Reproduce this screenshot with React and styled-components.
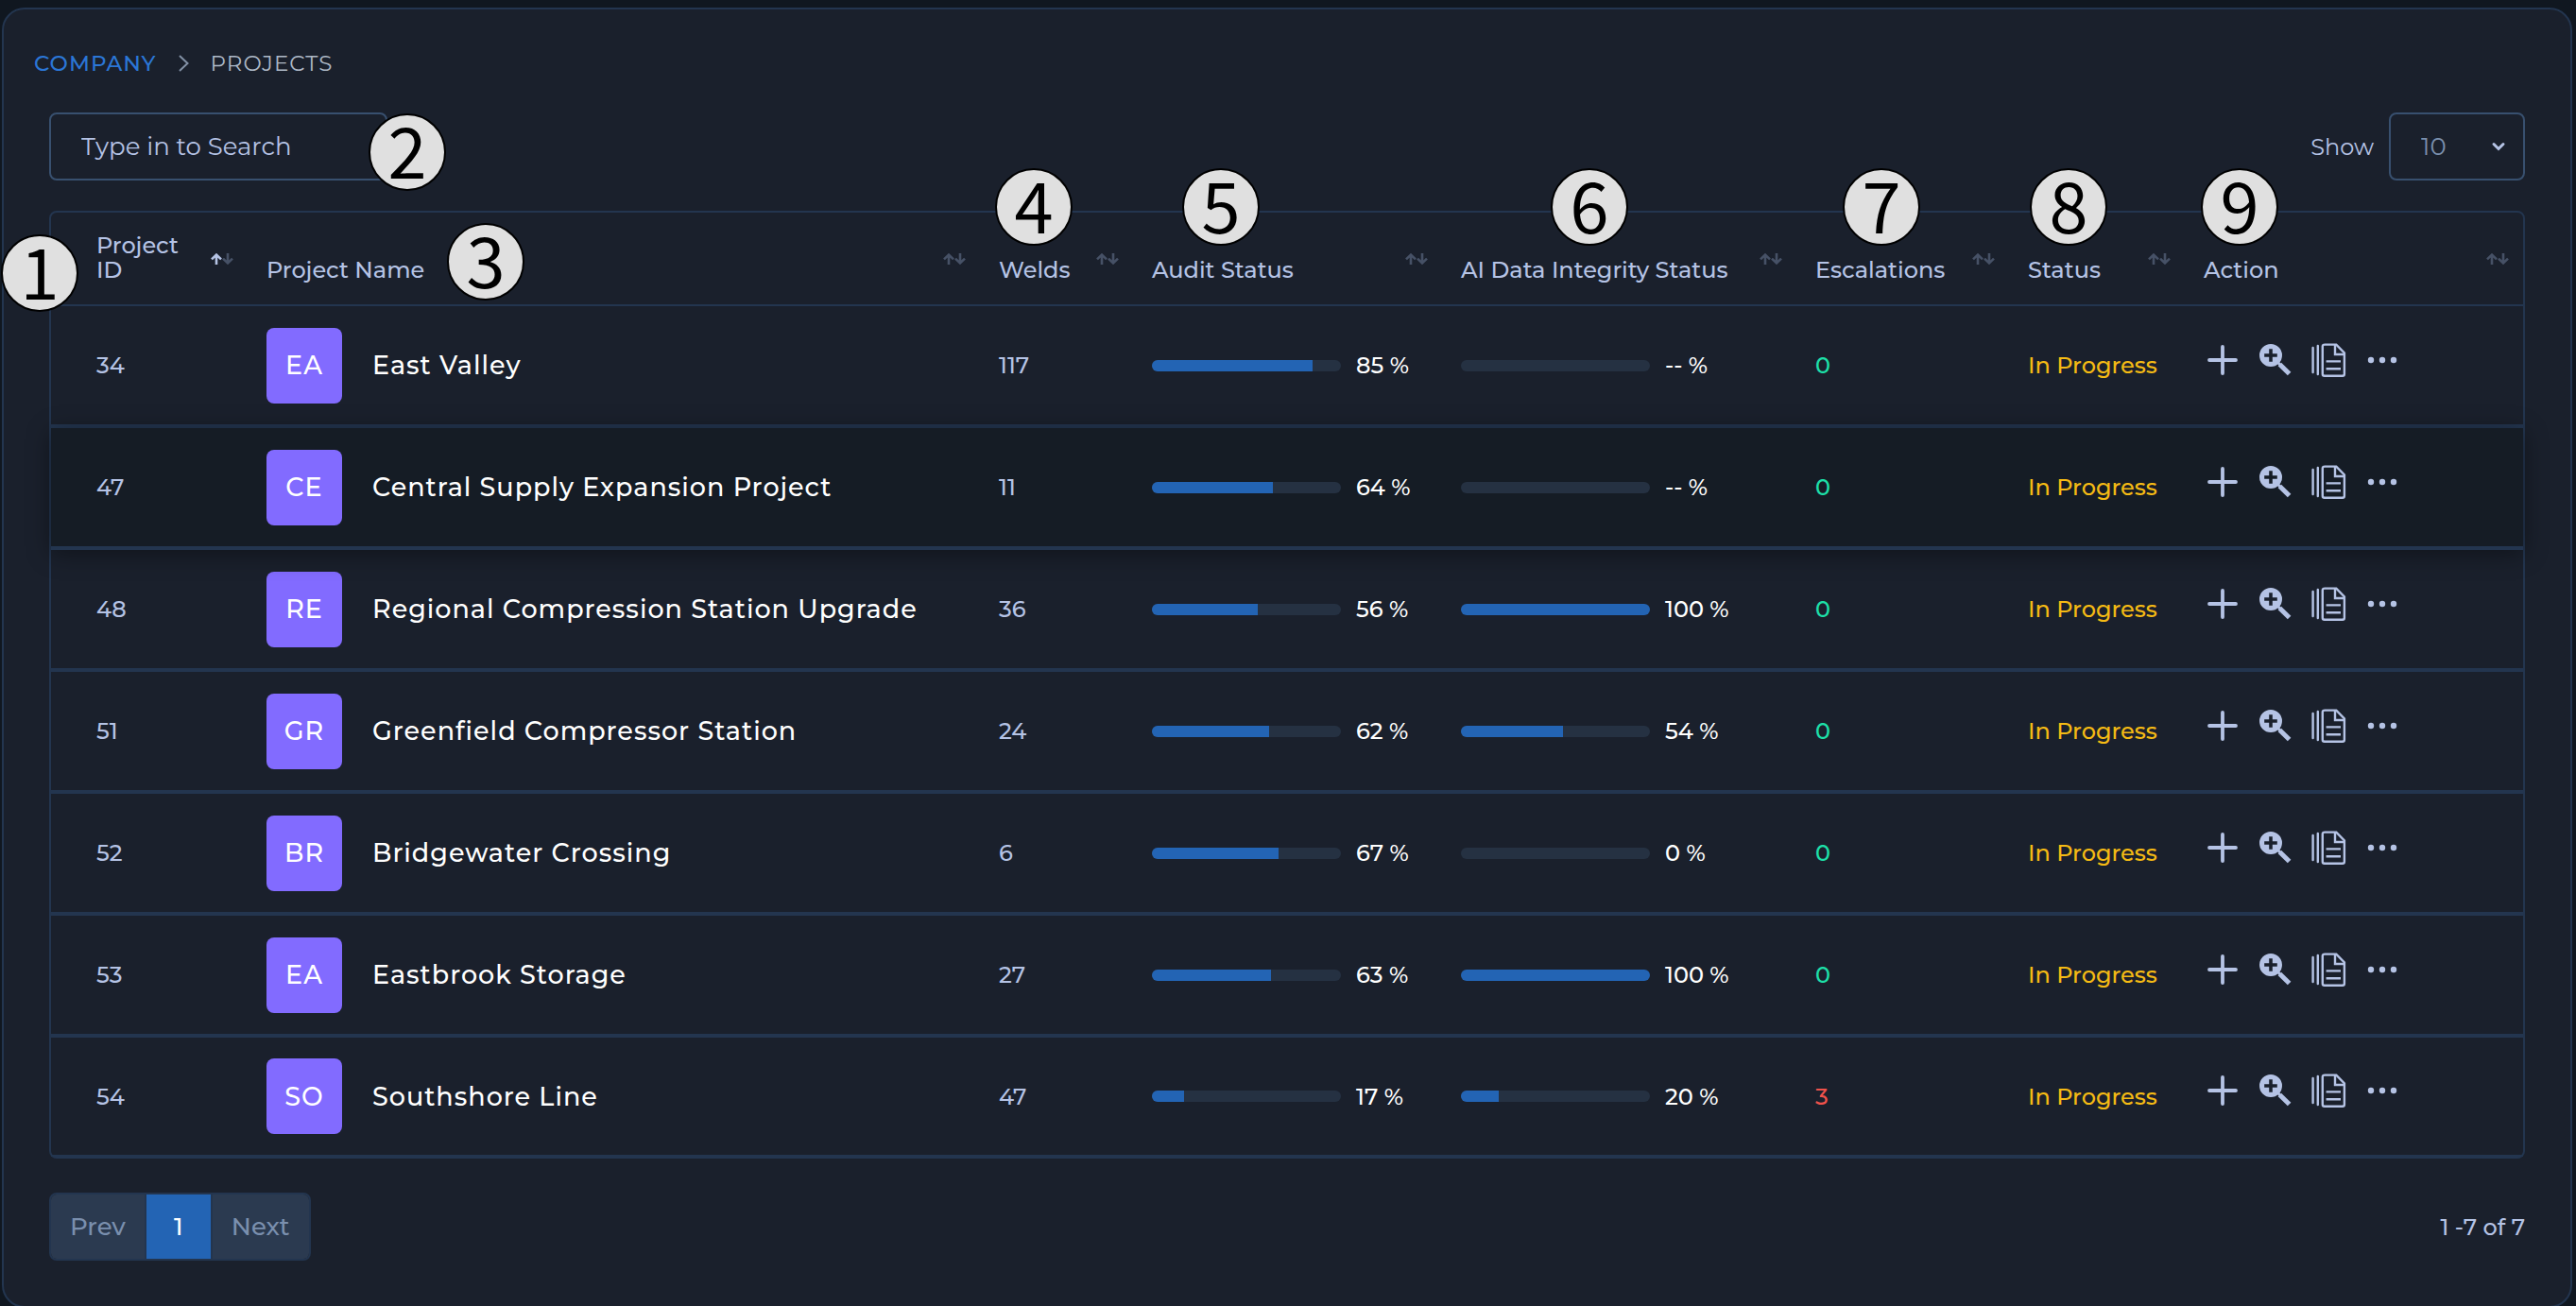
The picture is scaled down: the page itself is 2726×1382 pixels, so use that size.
import React, { useState } from "react";
import styled, { createGlobalStyle } from "styled-components";

const color = {
  page: "#101720",
  card: "#1a202c",
  line: "#23354f",
  field: "#38506f",
  text: "#b5c3e5",
  muted: "#7a8fae",
  faint: "#465166",
  link: "#2b76d6",
  blue: "#2364b4",
  track: "#253142",
};

const GlobalStyle = createGlobalStyle`
  *, *::before, *::after { box-sizing: border-box; }
  body {
    margin: 0;
    background: ${color.page};
    color: ${color.text};
    font-family: Montserrat, Inter, "Liberation Sans", sans-serif;
    font-size: 24px;
    font-weight: 500;
  }
  button, input, select { font: inherit; color: inherit; }
`;

const Page = styled.main`
  height: 100vh;
  overflow: hidden;
  padding: 8px 4px 0 2px;
`;

const Card = styled.section`
  padding: 41px 32px 48px;
  background: ${color.card};
  border: 2px solid ${color.line};
  border-radius: 24px;
`;

const Breadcrumb = styled.nav`
  display: flex;
  align-items: center;
  gap: 23px;
  height: 32px;
  font-size: 23px;
  font-weight: 400;
  letter-spacing: 1px;
  text-transform: uppercase;
`;

const Crumb = styled.a`
  color: ${color.link};
  font-weight: 500;
  text-decoration: none;
`;

const CurrentCrumb = styled.span`
  color: #adb8c6;
`;

const Content = styled.div`
  padding: 0 16px;
`;

const Bar = styled.div`
  display: flex;
  align-items: center;
  justify-content: space-between;
  margin: ${(p) => (p.$top ? "36px 0 32px" : "36px 0 0")};
`;

const SearchBox = styled.div`
  position: relative;
`;

const SearchInput = styled.input`
  display: block;
  width: 358px;
  height: 72px;
  padding: 0 32px;
  background: transparent;
  border: 2px solid ${color.field};
  border-radius: 8px;
  outline: none;
  font-size: 26px;
  font-weight: 400;
  &::placeholder { color: ${color.text}; opacity: 1; }
`;

const PageSize = styled.label`
  display: flex;
  align-items: center;
  gap: 16px;
  font-weight: 400;
`;

const SelectBox = styled.span`
  position: relative;
  display: block;
`;

const Select = styled.select`
  display: block;
  appearance: none;
  width: 144px;
  height: 72px;
  padding: 0 32px;
  background: transparent;
  border: 2px solid ${color.field};
  border-radius: 8px;
  color: ${color.muted};
  font-size: 26px;
`;

const SelectArrow = styled.svg`
  position: absolute;
  right: 20px;
  top: 28px;
  pointer-events: none;
`;

const TableFrame = styled.div`
  border: 2px solid ${color.line};
  border-radius: 8px;
`;

const Table = styled.table`
  width: 100%;
  table-layout: fixed;
  border-collapse: separate;
  border-spacing: 0;
`;

const Col = styled.col`
  width: ${(p) => p.$width};
`;

const HeadCell = styled.th`
  position: relative;
  padding: 0;
  border-bottom: 2px solid ${color.line};
  text-align: left;
`;

const SortButton = styled.button`
  display: flex;
  align-items: flex-end;
  justify-content: space-between;
  width: 100%;
  height: 97px;
  padding: 0 15px 23px ${(p) => (p.$first ? "48px" : "20px")};
  background: none;
  border: 0;
  font-weight: 500;
  line-height: 26px;
  text-align: left;
`;

const HeadLabel = styled.span`
  max-width: ${(p) => (p.$narrow ? "96px" : "none")};
  white-space: ${(p) => (p.$narrow ? "normal" : "nowrap")};
`;

const SortGlyph = styled.svg`
  flex: none;
  align-self: center;
  margin-top: 23px;
`;

const Row = styled.tr`
  position: relative;
  z-index: ${(p) => (p.$active ? 1 : 0)};
  background: ${(p) => (p.$active ? "#151c25" : "transparent")};
  box-shadow: ${(p) => (p.$active ? "0 4px 24px rgba(0, 0, 0, 0.4)" : "none")};
`;

const Cell = styled.td`
  height: 129px;
  padding: 0 0 0 ${(p) => (p.$first ? "48px" : "20px")};
  border-bottom: 4px solid ${color.line};
  color: ${(p) => p.$color || color.text};
  white-space: nowrap;
  ${Row}:last-child & {
    height: 126px;
    border-bottom-width: 2px;
  }
`;

const Project = styled.div`
  display: flex;
  align-items: center;
  gap: 32px;
  color: #fff;
  font-size: 27px;
  letter-spacing: 1px;
`;

const Avatar = styled.span`
  display: grid;
  place-items: center;
  width: 80px;
  height: 80px;
  background: #826bff;
  border-radius: 8px;
`;

const Progress = styled.div`
  display: flex;
  align-items: center;
  gap: 16px;
  color: #fff;
`;

const Track = styled.span`
  width: 200px;
  height: 12px;
  overflow: hidden;
  background: ${color.track};
  border-radius: 6px;
`;

const Fill = styled.span`
  display: block;
  height: 100%;
  background: ${color.blue};
`;

const Actions = styled.div`
  display: flex;
  gap: 16px;
  padding-bottom: 12px;
`;

const IconButton = styled.button`
  width: 40px;
  height: 40px;
  padding: 0;
  background: none;
  border: 0;
  svg { display: block; }
`;

const Pager = styled.div`
  display: flex;
  overflow: hidden;
  border: 2px solid ${color.line};
  border-radius: 8px;
`;

const PageButton = styled.button`
  min-width: 70px;
  height: 68px;
  padding: 0 20px;
  background: ${(p) => (p.$current ? color.blue : "#2b3a50")};
  border: 0;
  border-right: 2px solid ${color.line};
  color: ${(p) => (p.$current ? "#fff" : color.muted)};
  font-size: 26px;
  &:last-child { border-right: 0; }
`;

const Marker = styled.span`
  position: absolute;
  z-index: 2;
  left: ${(p) => p.$x}px;
  top: ${(p) => p.$y}px;
  display: grid;
  place-items: center;
  width: 82px;
  height: 82px;
  padding-bottom: 8px;
  background: #e0e0e0;
  border: 2px solid #000;
  border-radius: 50%;
  color: #000;
  font-family: "Noto Sans CJK SC", "Noto Sans", sans-serif;
  font-size: 74px;
  font-weight: 400;
  line-height: 70px;
  pointer-events: none;
`;

const columns = [
  { label: "Project ID", width: "208px", marker: 1, x: -53, y: 23 },
  { label: "Project Name", width: "auto", marker: 3, x: 211, y: 11 },
  { label: "Welds", width: "162px", marker: 4, x: 16, y: -47 },
  { label: "Audit Status", width: "327px", marker: 5, x: 52, y: -47 },
  { label: "AI Data Integrity Status", width: "375px", marker: 6, x: 115, y: -47 },
  { label: "Escalations", width: "225px", marker: 7, x: 49, y: -47 },
  { label: "Status", width: "186px", marker: 8, x: 22, y: -47 },
  { label: "Action", width: "358px", marker: 9, x: 17, y: -47 },
];

const projects = [
  { id: 34, name: "East Valley", welds: 117, audit: 85, integrity: null, escalations: 0 },
  { id: 47, name: "Central Supply Expansion Project", welds: 11, audit: 64, integrity: null, escalations: 0 },
  { id: 48, name: "Regional Compression Station Upgrade", welds: 36, audit: 56, integrity: 100, escalations: 0 },
  { id: 51, name: "Greenfield Compressor Station", welds: 24, audit: 62, integrity: 54, escalations: 0 },
  { id: 52, name: "Bridgewater Crossing", welds: 6, audit: 67, integrity: 0, escalations: 0 },
  { id: 53, name: "Eastbrook Storage", welds: 27, audit: 63, integrity: 100, escalations: 0 },
  { id: 54, name: "Southshore Line", welds: 47, audit: 17, integrity: 20, escalations: 3 },
];

function SortIcon({ ascending }) {
  return (
    <SortGlyph width="24" height="12" viewBox="0 0 24 12" fill="none" strokeWidth="2.6" aria-hidden="true">
      <path d="M6 12V2M1 6.4 6 1.6l5 4.8" stroke={ascending ? color.text : color.faint} />
      <path d="M18 0v10M13 5.6l5 4.8 5-4.8" stroke={color.faint} />
    </SortGlyph>
  );
}

function PlusIcon() {
  return (
    <svg width="40" height="40" viewBox="0 0 40 40" fill="none" stroke={color.text} strokeWidth="3.8" strokeLinecap="round">
      <path d="M20 6v28M6 20h28" />
    </svg>
  );
}

function ZoomIcon() {
  return (
    <svg width="40" height="40" viewBox="0 0 40 40">
      <path
        fill={color.text}
        fillRule="evenodd"
        d="M15 3a12 12 0 1 1 0 24 12 12 0 0 1 0-24Zm-1.8 5.2v5H8.2v3.6h5v5h3.6v-5h5v-3.6h-5v-5Z"
      />
      <path d="m22.5 22.5 3 3" stroke={color.text} strokeWidth="3" />
      <path d="m24.4 24.4 10.2 10.2" stroke={color.text} strokeWidth="5" />
    </svg>
  );
}

function DocumentsIcon() {
  return (
    <svg width="40" height="40" viewBox="0 0 40 40" fill="none" stroke={color.text} strokeWidth="2.4">
      <path d="M3.6 7v26M8.8 5v30" strokeLinecap="round" />
      <path d="M15.5 3.6h12.8l8.6 8.8v22.4a2 2 0 0 1-2 2H15.8a2 2 0 0 1-2-2V5.6a2 2 0 0 1 2-2Z" />
      <path d="M27 4v10h10" />
      <path d="M17.6 21.4h15.4M17.6 29.2h15.4" />
    </svg>
  );
}

function DotsIcon() {
  return (
    <svg width="40" height="40" viewBox="0 0 40 40" fill={color.text}>
      <circle cx="9" cy="20" r="3.2" />
      <circle cx="21" cy="20" r="3.2" />
      <circle cx="33" cy="20" r="3.2" />
    </svg>
  );
}

function ProgressCell({ value }) {
  return (
    <Cell>
      <Progress>
        <Track>
          <Fill style={{ width: `${value || 0}%` }} />
        </Track>
        <span>{value === null ? "--" : value} %</span>
      </Progress>
    </Cell>
  );
}

export default function App() {
  const [query, setQuery] = useState("");

  return (
    <Page>
      <GlobalStyle />
      <Card>
        <Breadcrumb aria-label="Breadcrumb">
          <Crumb href="#company">Company</Crumb>
          <svg width="11" height="18" viewBox="0 0 11 18" fill="none" stroke="#8290a5" strokeWidth="2" aria-hidden="true">
            <path d="m1 1 8.5 8L1 17" />
          </svg>
          <CurrentCrumb>Projects</CurrentCrumb>
        </Breadcrumb>
        <Content>
          <Bar $top>
            <SearchBox>
              <SearchInput
                aria-label="Search projects"
                placeholder="Type in to Search"
                value={query}
                onChange={(e) => setQuery(e.target.value)}
              />
              <Marker $x={338} $y={1}>2</Marker>
            </SearchBox>
            <PageSize>
              Show
              <SelectBox>
                <Select defaultValue="10">
                  <option>10</option>
                  <option>25</option>
                  <option>50</option>
                </Select>
                <SelectArrow width="16" height="16" viewBox="0 0 16 16" fill="none" stroke={color.text} strokeWidth="3" strokeLinecap="round">
                  <path d="m3 5.5 5 5 5-5" />
                </SelectArrow>
              </SelectBox>
            </PageSize>
          </Bar>
          <TableFrame>
            <Table>
              <colgroup>
                {columns.map((c) => <Col key={c.label} $width={c.width} />)}
              </colgroup>
              <thead>
                <tr>
                  {columns.map((c, i) => (
                    <HeadCell key={c.label} scope="col">
                      <SortButton type="button" $first={i === 0}>
                        <HeadLabel $narrow={i === 0}>{c.label}</HeadLabel>
                        <SortIcon ascending={i === 0} />
                      </SortButton>
                      <Marker $x={c.x} $y={c.y}>{c.marker}</Marker>
                    </HeadCell>
                  ))}
                </tr>
              </thead>
              <tbody>
                {projects.map((p) => (
                  <Row key={p.id} $active={p.id === 47}>
                    <Cell $first>{p.id}</Cell>
                    <Cell>
                      <Project>
                        <Avatar>{p.name.slice(0, 2).toUpperCase()}</Avatar>
                        {p.name}
                      </Project>
                    </Cell>
                    <Cell>{p.welds}</Cell>
                    <ProgressCell value={p.audit} />
                    <ProgressCell value={p.integrity} />
                    <Cell $color={p.escalations ? "#f0524b" : "#1ddfa8"}>{p.escalations}</Cell>
                    <Cell $color="#f5bb14">In Progress</Cell>
                    <Cell>
                      <Actions>
                        <IconButton type="button" aria-label="Add"><PlusIcon /></IconButton>
                        <IconButton type="button" aria-label="Inspect"><ZoomIcon /></IconButton>
                        <IconButton type="button" aria-label="Documents"><DocumentsIcon /></IconButton>
                        <IconButton type="button" aria-label="More"><DotsIcon /></IconButton>
                      </Actions>
                    </Cell>
                  </Row>
                ))}
              </tbody>
            </Table>
          </TableFrame>
          <Bar>
            <Pager>
              <PageButton type="button">Prev</PageButton>
              <PageButton type="button" $current aria-current="page">1</PageButton>
              <PageButton type="button">Next</PageButton>
            </Pager>
            <span>1 -7 of 7</span>
          </Bar>
        </Content>
      </Card>
    </Page>
  );
}
